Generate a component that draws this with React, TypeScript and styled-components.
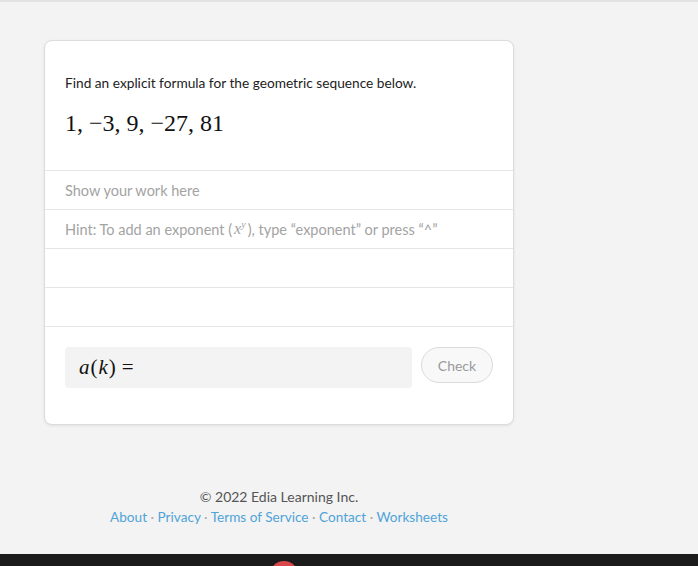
import React from 'react'
import styled, { createGlobalStyle } from 'styled-components'

const GlobalStyle = createGlobalStyle`
  html, body {
    margin: 0;
    padding: 0;
    background: #f3f3f3;
    font-family: Lato, "Open Sans", sans-serif;
  }
`

const Page = styled.div({
  height: 566,
  display: 'flex',
  flexDirection: 'column',
  borderTop: '2px solid #e2e2e2',
  boxSizing: 'border-box',
  overflow: 'hidden',
})

const Column = styled.main({
  width: 470,
  marginLeft: 44,
  paddingTop: 38,
  flex: 1,
})

const Card = styled.section({
  background: '#fff',
  border: '1px solid #dcdcdc',
  borderRadius: 8,
  boxShadow: '0 1px 3px rgba(0,0,0,0.08)',
  overflow: 'hidden',
})

const Prompt = styled.div({
  padding: '33px 20px 33px',
  borderBottom: '1px solid #e6e6e6',
})

const Question = styled.p({
  margin: 0,
  fontSize: 13.7,
  lineHeight: '18px',
  color: '#222',
})

const Sequence = styled.div({
  marginTop: 17,
  fontFamily: '"Liberation Serif", "DejaVu Serif", serif',
  fontSize: 24,
  lineHeight: '28px',
  color: '#111',
})

const WorkRow = styled.div({
  height: 38,
  padding: '0 20px',
  display: 'flex',
  alignItems: 'center',
  borderBottom: '1px solid #e6e6e6',
  fontSize: 14.5,
  color: '#a3a3a3',
  whiteSpace: 'pre',
  '&:last-of-type': {
    height: 37,
  },
})

const MathInline = styled.span({
  fontFamily: '"Liberation Serif", serif',
  fontStyle: 'italic',
  fontSize: 16,
  padding: '0 2px',
  sup: {
    fontSize: 10,
  },
})

const AnswerBar = styled.div({
  display: 'flex',
  alignItems: 'flex-start',
  gap: 9,
  padding: '20px 20px 36px',
})

const AnswerField = styled.div({
  flex: 1,
  height: 41,
  background: '#f3f3f3',
  borderRadius: 4,
  display: 'flex',
  alignItems: 'center',
  padding: '0 13px',
  fontFamily: '"Liberation Serif", serif',
  fontSize: 21,
  color: '#111',
})

const Var = styled.i({
  padding: '0 1px',
})

const Equals = styled.span({
  marginLeft: 6,
})

const CheckButton = styled.button({
  width: 72,
  height: 36,
  borderRadius: 18,
  border: '1px solid #dadada',
  background: '#f8f8f8',
  color: '#9a9a9a',
  fontFamily: 'inherit',
  fontSize: 14,
  cursor: 'pointer',
})

const Footer = styled.footer({
  textAlign: 'center',
  paddingTop: 62,
  fontSize: 14,
  lineHeight: '20px',
  color: '#555',
})

const Links = styled.div({
  color: '#aaa',
  fontSize: 13.6,
  a: {
    color: '#4fa3d9',
    textDecoration: 'none',
  },
})

const BottomBar = styled.div({
  height: 12,
  background: '#1b1b1b',
  position: 'relative',
})

const Badge = styled.div({
  position: 'absolute',
  left: 270,
  top: 7,
  width: 28,
  height: 28,
  borderRadius: '50%',
  background: '#d9474b',
})

const links = ['About', 'Privacy', 'Terms of Service', 'Contact', 'Worksheets']

export default function App() {
  return (
    <>
      <GlobalStyle />
      <Page>
        <Column>
          <Card>
            <Prompt>
              <Question>Find an explicit formula for the geometric sequence below.</Question>
              <Sequence>1, −3, 9, −27, 81</Sequence>
            </Prompt>
            <WorkRow>Show your work here</WorkRow>
            <WorkRow>
              Hint: To add an exponent (<MathInline>x<sup>y</sup></MathInline>), type “exponent” or press “^”
            </WorkRow>
            <WorkRow />
            <WorkRow />
            <AnswerBar>
              <AnswerField>
                <Var>a</Var>(<Var>k</Var>)<Equals>=</Equals>
              </AnswerField>
              <CheckButton>Check</CheckButton>
            </AnswerBar>
          </Card>
          <Footer>
            <div>© 2022 Edia Learning Inc.</div>
            <Links>
              {links.map((l, i) => (
                <React.Fragment key={l}>
                  {i > 0 && ' · '}
                  <a href="#">{l}</a>
                </React.Fragment>
              ))}
            </Links>
          </Footer>
        </Column>
        <BottomBar>
          <Badge />
        </BottomBar>
      </Page>
    </>
  )
}
